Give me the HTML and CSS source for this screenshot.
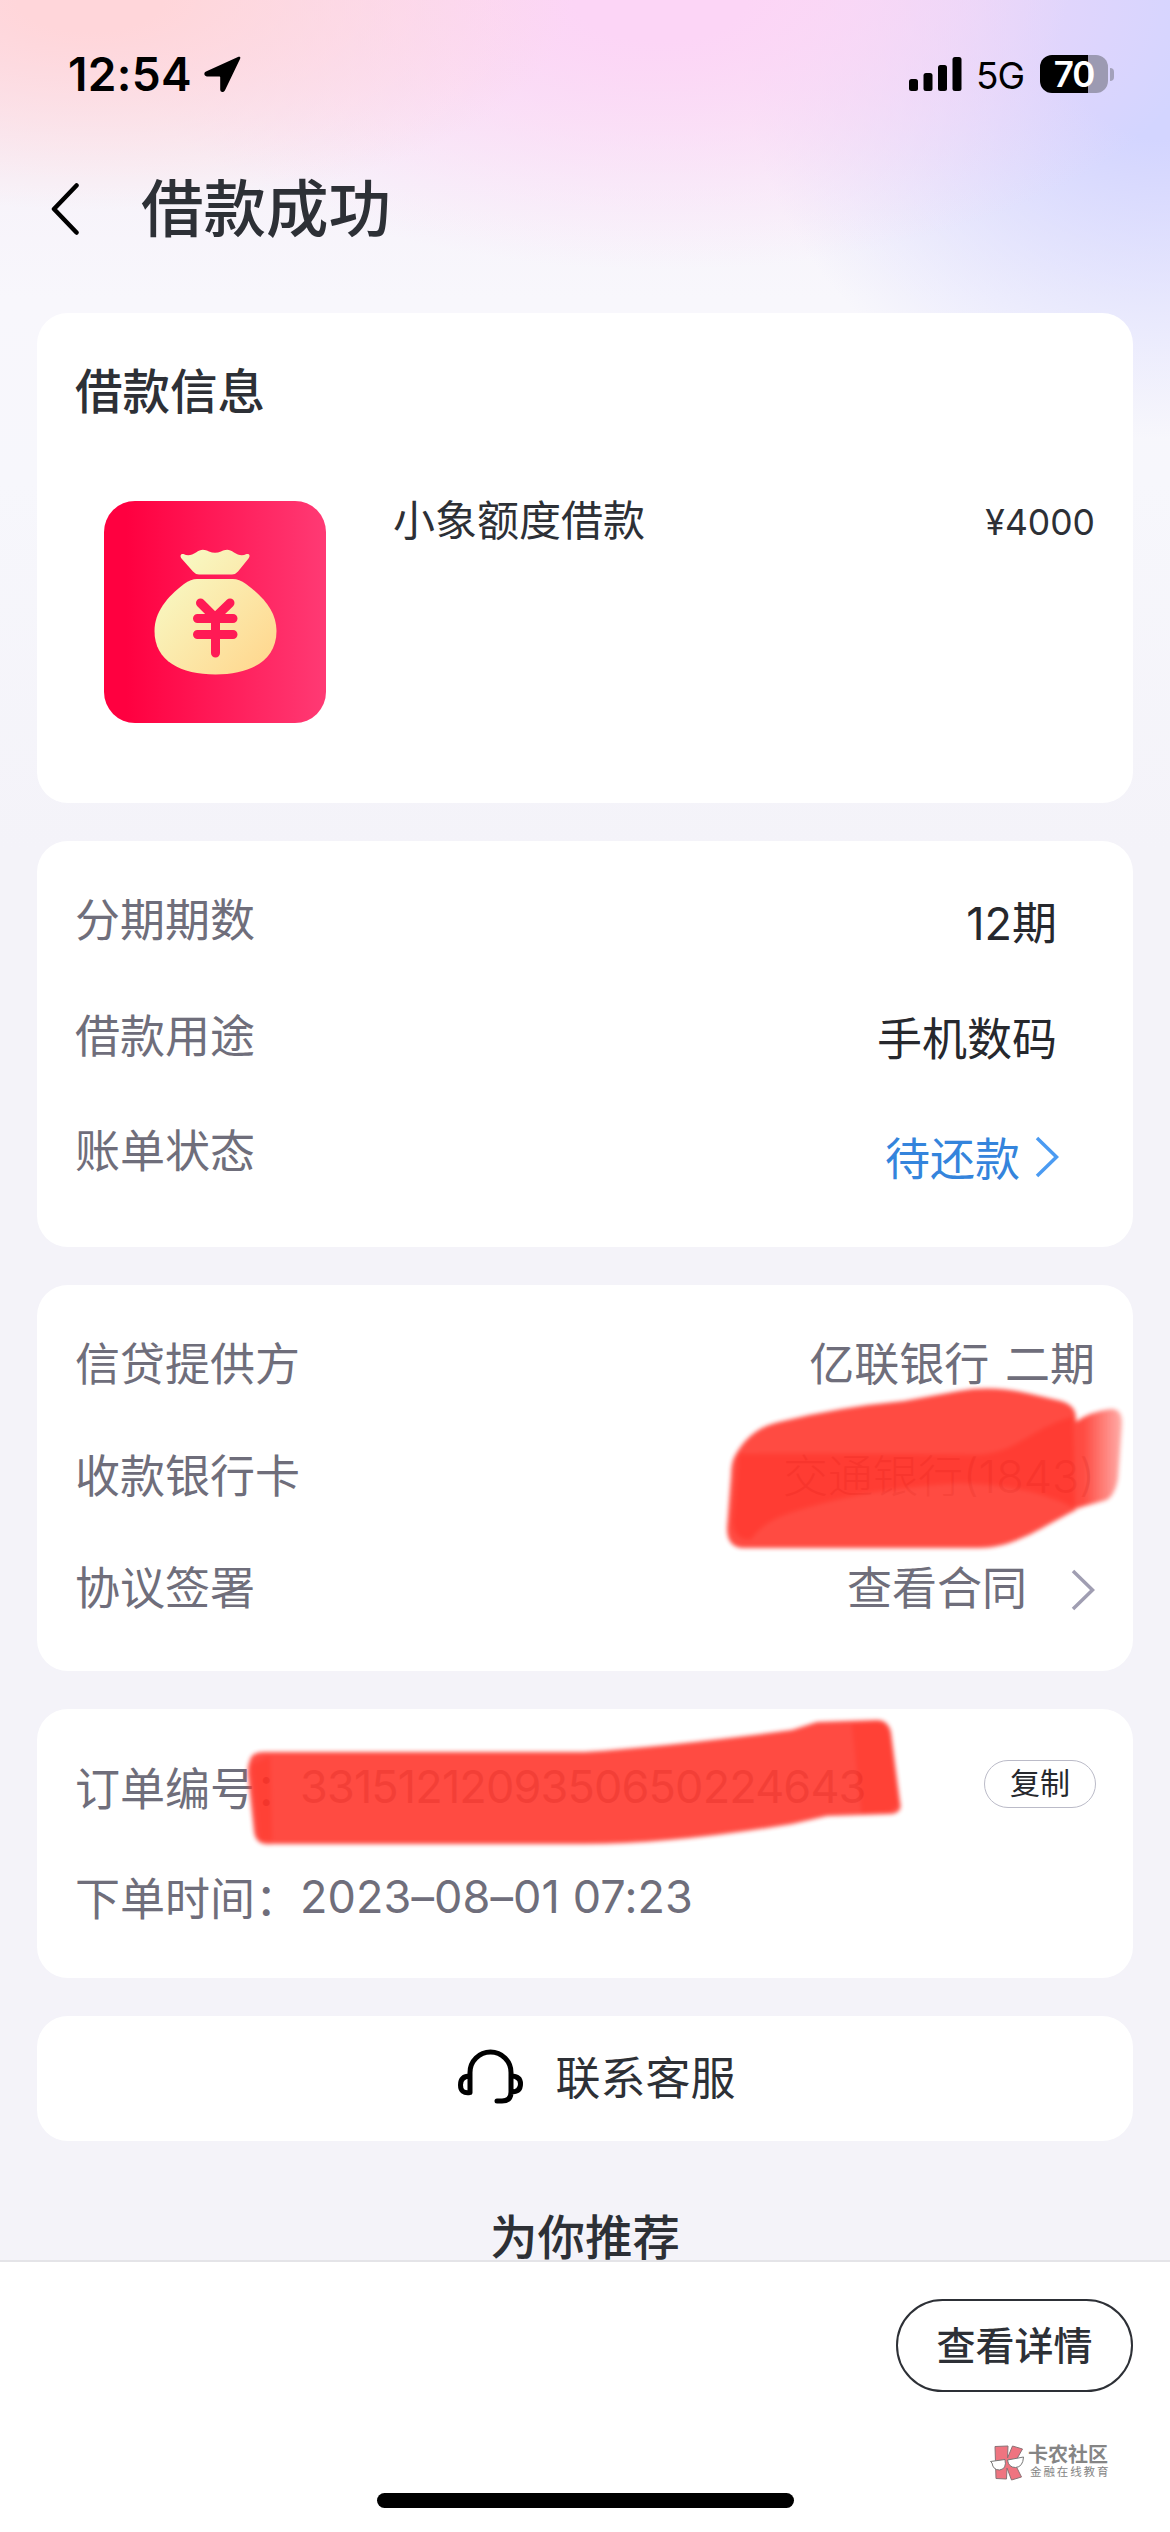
FILE: index.html
```html
<!DOCTYPE html>
<html lang="zh-CN">
<head>
  <meta charset="UTF-8" />
  <meta name="viewport" content="width=device-width, initial-scale=1.0"/>
  <title>借款成功</title>
  <link rel="stylesheet" href="styles.css">
</head>
<body>
  <div class="status-bar">
    <span class="time">12:54</span>
    <svg class="location" viewBox="0 0 37 36"><path d="M34.5 .8 2 15.6C-.6 16.900 0 20.400 2.800 20.400H15.200C15.900 20.400 16.200 20.700 16.200 21.400V33.400C16.200 36.300 19.700 36.900 21 34.200L36 3C36.900 1.200 36 .2 34.500 .8Z"/></svg>
    <div class="status-right">
      <svg class="signal" viewBox="0 0 53 35">
        <rect x="0" y="22" width="9" height="12" rx="2.500"/>
        <rect x="14.500" y="16" width="9" height="18" rx="2.500"/>
        <rect x="29" y="8" width="9" height="26" rx="2.500"/>
        <rect x="43.500" y="0" width="9" height="34" rx="2.500"/>
      </svg>
      <span class="network">5G</span>
      <div class="battery"><span>70</span></div>
      <i class="battery-cap"></i>
    </div>
  </div>

  <header>
    <svg class="back" viewBox="0 0 28 52"><path d="M25.500 2.500 3 26 25.500 49.500"/></svg>
    <h1>借款成功</h1>
  </header>

  <main>
    <section class="card loan">
      <h2>借款信息</h2>
      <div class="product">
        <svg class="product-img" viewBox="0 0 222 222">
          <defs>
            <linearGradient id="red" x1="0" x2="1" y1="0" y2="0">
              <stop offset=".1" stop-color="#ff0040"/>
              <stop offset="1" stop-color="#ff3a74"/>
            </linearGradient>
            <linearGradient id="gold" gradientUnits="userSpaceOnUse" x1="62" y1="75" x2="160" y2="165">
              <stop offset="0" stop-color="#f8f8c2"/>
              <stop offset="1" stop-color="#ffd890"/>
            </linearGradient>
          </defs>
          <rect width="222" height="222" rx="31" fill="url(#red)"/>
          <path fill="url(#gold)" d="M79.500 53C84 55.500 88 54 92 51.500 97 47.500 101 48.500 105 50.500Q111 53 117 50.500C121 48.500 125 47.500 130 51.500 134 54 138 55.500 142.500 53 145.500 52.500 146.500 54.500 144.500 57.500L134 70.500Q131.500 73.500 128 73.500H95Q91.500 73.500 89 70.500L77.500 57.500C75.500 54.500 77 52.500 79.500 53Z"/>
          <path fill="url(#gold)" d="M93 78H129Q135 78 142 83C160 96 172.500 111 172.500 130 172.500 160 146 173.500 111.500 173.500S50.500 160 50.500 130C50.500 111 63 96 80 83Q87 78 93 78Z"/>
          <path class="yen" d="M96.500 102 111 116.500 126 102M93.500 117.500H129M93.500 133.500H129M111.500 116V152"/>
        </svg>
        <span class="product-name">小象额度借款</span>
        <span class="amount">¥4000</span>
      </div>
    </section>

    <section class="card detail">
      <div class="row"><label>分期期数</label><span class="value">12期</span></div>
      <div class="row"><label>借款用途</label><span class="value">手机数码</span></div>
      <div class="row pending">
        <label>账单状态</label>
        <a class="value">待还款</a>
        <svg class="arrow" viewBox="0 0 24 42"><path d="M2 2 21.500 21 2 40"/></svg>
      </div>
    </section>

    <section class="card provider">
      <div class="row"><label>信贷提供方</label><span class="value">亿联银行 二期</span></div>
      <div class="row"><label>收款银行卡</label><span class="value bank">交通银行(1843)</span></div>
      <div class="row contract">
        <label>协议签署</label>
        <span class="value">查看合同</span>
        <svg class="arrow" viewBox="0 0 24 42"><path d="M2 2 21.500 21 2 40"/></svg>
      </div>
      <svg class="marker marker-card" viewBox="0 0 420 180">
        <defs>
          <linearGradient id="fade" x1="0" x2="1" y1="0" y2="0">
            <stop offset=".2" stop-color="#ff3c32"/>
            <stop offset="1" stop-color="#ff3c32" stop-opacity=".45"/>
          </linearGradient>
        </defs>
        <path fill="url(#fade)" d="M365 42Q382 30 402 28 414 28 413 44L409 98Q405 118 394 120L365 128Z"/>
        <path fill="#ff3c32" d="M27 73Q42 47 70 41 130 26 195 20L250 10Q285 4 322 13L352 20Q367 24 367 38L366 129 374 126C340 140 310 167 270 167H35Q18 167 18 147L22 95Q22 80 27 73Z"/>
        <path fill="#ff281e" opacity=".8" d="M30 73Q130 72 270 74C310 71 320 48 364 36L366 127Q320 103 250 102 150 108 80 132 55 140 42 158 25 160 24 140Z"/>
      </svg>
    </section>

    <section class="card order">
      <div class="row">
        <label>订单编号：</label><span class="number">3315121209350650224643</span>
        <button class="copy">复制</button>
      </div>
      <div class="row"><label>下单时间：</label><span class="date">2023–08–01 07:23</span></div>
      <svg class="marker marker-order" viewBox="0 0 680 150">
        <path fill="#ff3c32" d="M18 50Q20 42 32 42H352Q440 36 560 20L585 12 645 10Q656 10 659 22L668 92Q671 102 660 104L595 106 560 114Q440 134 352 134H40Q24 136 22 122L16 66Q15 56 18 50Z"/>
        <path fill="#ff281e" opacity=".55" d="M620 14 648 12Q655 14 657 26L666 94 656 102 630 104ZM20 55 38 46 40 130 28 130Z"/>
      </svg>
    </section>

    <section class="card service">
      <svg class="headset" viewBox="0 0 66 56">
        <path d="M12 43.500V23.500A20.500 20.500 0 0 1 53 23.500V43Q53 52 44 52H39M12 27Q2.500 27 2.500 36T12 43.500M53 27Q62.500 27 62.500 35T53 43"/>
      </svg>
      <span>联系客服</span>
    </section>

    <h2 class="recommend">为你推荐</h2>
  </main>

  <footer>
    <button class="view-btn">查看详情</button>
    <div class="community">
      <svg class="community-logo" viewBox="0 0 34 36">
        <path class="k" d="M5 1.500 18 1 17.500 13 22.500 1 32.500 4 24.500 18 31.500 32 21.500 35 17 23 16.500 34 6 33.500Z"/>
        <path class="glasses" d="M.5 16.500 15 14.500Q17 24 9.500 25 3 25 2 18ZM17.500 15 33.500 12Q33 22 25.500 22.500 18.500 22.500 17.500 15Z"/>
      </svg>
      <div class="community-text"><b>卡农社区</b><small>金融在线教育</small></div>
    </div>
    <div class="home-bar"></div>
  </footer>
</body>
</html>
```

FILE: styles.css
```css
* {
  box-sizing: border-box;
}
body {
  position: relative;
  width: 1170px;
  height: 2532px;
  margin: 0;
  overflow: hidden;
  display: flex;
  flex-direction: column;
  font-family: Inter, "Noto Sans CJK SC", sans-serif;
  font-size: 45px;
  color: #2d3036;
  background:
    radial-gradient(ellipse 480px 210px at 90px 0, #ffd6da 15%, rgba(255,218,222,0) 100%),
    radial-gradient(ellipse 560px 270px at 660px 0, #fcd5f6 15%, rgba(252,218,247,0) 100%),
    radial-gradient(ellipse 430px 400px at 1170px 40px, #d3d5ff 25%, rgba(218,220,255,0) 100%),
    linear-gradient(#f8e4f2 0, #f7f3fa 180px, #f8f7fc 300px, #f7f7fc 480px, #f4f3f9 850px);
}
svg {
  display: block;
  flex: none;
}
h1, h2 {
  margin: 0;
  font-weight: 500;
}

/* status bar */
.status-bar {
  height: 148px;
  padding: 0 56px 0 68px;
  display: flex;
  align-items: center;
  color: #000;
}
.time {
  width: 124px;
  font-size: 46px;
  font-weight: 600;
  white-space: nowrap;
  letter-spacing: .3px;
}
.location {
  width: 37px;
  height: 36px;
  margin-left: 12px;
}
.status-right {
  margin-left: auto;
  display: flex;
  align-items: center;
}
.signal {
  width: 53px;
  height: 35px;
}
.network {
  width: 48px;
  margin: 3px 16px 0 14px;
  font-size: 37px;
  letter-spacing: -1px;
}
.battery {
  width: 68px;
  height: 38px;
  border-radius: 12px;
  background: linear-gradient(90deg, #000 70%, #9c9ab2 70%);
  color: #fff;
  font-size: 35px;
  font-weight: 600;
  line-height: 38px;
  text-align: center;
  letter-spacing: -1px;
}
.battery-cap {
  width: 4px;
  height: 13px;
  margin-left: 2px;
  border-radius: 0 4px 4px 0;
  background: #a3a1ba;
}

header {
  height: 165px;
  padding: 0 0 43px 51px;
  display: flex;
  align-items: center;
}
.back {
  width: 28px;
  height: 52px;
  fill: none;
  stroke: #000;
  stroke-width: 4.5;
  stroke-linecap: round;
  stroke-linejoin: round;
}
h1 {
  margin-left: 62px;
  font-size: 62.5px;
  line-height: 80px;
}

/* cards */
main {
  height: 1947px;
  padding: 0 37px;
  display: flex;
  flex-direction: column;
  gap: 38px;
}
.card {
  position: relative;
  flex: none;
  padding: 0 38px;
  border-radius: 31px;
  background: #fff;
}
.loan {
  height: 490px;
  padding-top: 48px;
}
h2 {
  font-size: 47.5px;
  line-height: 62px;
}
.product {
  margin-top: 78px;
  padding-left: 29px;
  display: flex;
  align-items: flex-start;
}
.product-img {
  width: 222px;
  height: 222px;
}
.yen {
  fill: none;
  stroke: #ff1a55;
  stroke-width: 9;
  stroke-linecap: round;
}
.product-name {
  margin-left: 67px;
  font-size: 42px;
  line-height: 40px;
}
.amount {
  margin-left: auto;
  font-size: 35.5px;
  line-height: 44px;
}

.row {
  display: flex;
  align-items: center;
  color: #6f6e7b;
  white-space: nowrap;
}
.row .value {
  margin-left: auto;
  word-spacing: 3px;
}
.arrow {
  width: 24px;
  height: 42px;
  fill: none;
  stroke: #a09eb2;
  stroke-width: 3.5;
}
.detail {
  height: 406px;
  padding: 19px 76px 0 38px;
}
.detail .row {
  height: 115.5px;
}
.detail .value {
  margin-top: 6px;
  color: #26282d;
}
.detail .pending .value {
  margin-top: 15px;
  color: #3484dc;
}
.pending .arrow {
  margin: 16px -2px 0 15px;
  stroke: #4b9bf2;
}
.provider {
  height: 386px;
  padding-top: 20px;
}
.provider .row {
  height: 112px;
}
.provider .bank {
  font-weight: 300;
  color: #a8a7b0;
}
.contract .arrow {
  margin: 9px 0 0 44px;
}
.order {
  height: 269px;
  padding-top: 22px;
}
.order .row {
  height: 110px;
}
.number {
  letter-spacing: -.85px;
}
.date {
  letter-spacing: .1px;
}
.copy {
  width: 112px;
  height: 48px;
  margin: -4px -1px 0 auto;
  padding: 0 0 3px;
  border: 1.5px solid #bbbbc8;
  border-radius: 24px;
  background: #fff;
  color: #26282d;
  font: 30px/42px Inter, "Noto Sans CJK SC", sans-serif;
}

/* red marker strokes lie over the rows */
.marker {
  position: absolute;
  opacity: .92;
  filter: blur(2px);
}
.marker-card {
  left: 672px;
  top: 96px;
  width: 420px;
  height: 180px;
}
.marker-order {
  left: 195px;
  top: 1px;
  width: 680px;
  height: 150px;
}

.service {
  height: 125px;
  display: flex;
  align-items: center;
  justify-content: center;
  padding-right: 14px;
}
.service span {
  margin: -7px 0 0 31px;
}
.headset {
  width: 66px;
  height: 56px;
  margin-top: -3px;
  fill: none;
  stroke: #000;
  stroke-width: 5;
  stroke-linecap: round;
  stroke-linejoin: round;
}
.recommend {
  margin-top: 35px;
  line-height: 48px;
  text-align: center;
}

footer {
  flex: 1;
  padding: 37px 37px 0;
  display: flex;
  flex-direction: column;
  align-items: flex-end;
  border-top: 2px solid #e4e4e8;
  background: #fff;
}
.view-btn {
  width: 237px;
  height: 93px;
  padding: 0;
  border: 2px solid #2d3036;
  border-radius: 47px;
  background: #fff;
  color: #2d3036;
  font: 500 39px/86px Inter, "Noto Sans CJK SC", sans-serif;
}
.community {
  margin: 53px 24px 0 0;
  display: flex;
  gap: 4px;
}
.community-logo {
  width: 34px;
  height: 36px;
}
.k {
  fill: #ef7480;
  stroke: #8b7276;
}
.glasses {
  fill: #fff;
  stroke: #777;
}
.community-text {
  width: 81px;
  color: #858585;
}
.community b {
  display: block;
  font-size: 20px;
  line-height: 20px;
}
.community small {
  display: block;
  font-size: 11.5px;
  line-height: 15px;
  padding-left: 2px;
  letter-spacing: 1.900px;
  white-space: nowrap;
}
.home-bar {
  width: 417px;
  height: 15px;
  margin: 12px auto 0;
  border-radius: 8px;
  background: #000;
}
```
